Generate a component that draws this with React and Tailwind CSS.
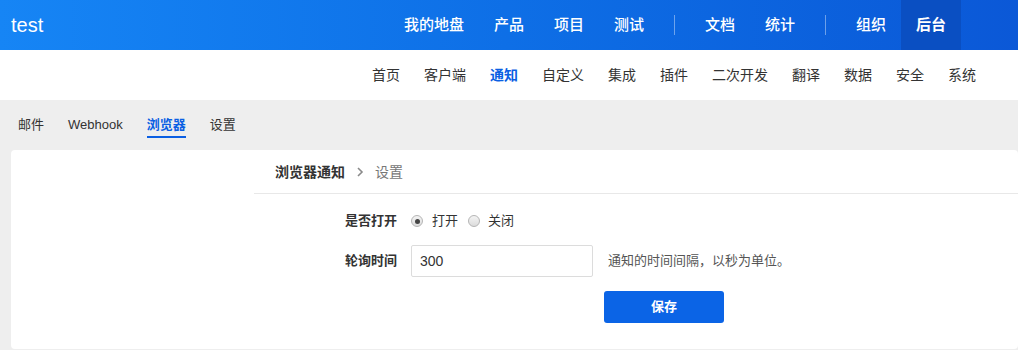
import React from "react";

const FONT = { fontFamily: '"Liberation Sans", "Noto Sans CJK SC", sans-serif' };

function Radio({ checked }) {
  return (
    <span className="relative inline-flex h-[12px] w-[12px] items-center justify-center rounded-full border border-[#b5b5b5] bg-gradient-to-b from-[#f4f4f4] to-[#dcdcdc]">
      {checked && <span className="h-[5px] w-[5px] rounded-full bg-[#444]" />}
    </span>
  );
}

export default function App() {
  const topNav = [
    { t: "我的地盘" },
    { t: "产品" },
    { t: "项目" },
    { t: "测试" },
    { div: true },
    { t: "文档" },
    { t: "统计" },
    { div: true },
    { t: "组织" },
    { t: "后台", active: true },
  ];
  const subNav = ["首页", "客户端", "通知", "自定义", "集成", "插件", "二次开发", "翻译", "数据", "安全", "系统"];
  const tabs = ["邮件", "Webhook", "浏览器", "设置"];

  return (
    <div className="h-[350px] w-[1018px] overflow-hidden bg-[#eeeeee]" style={FONT}>
      <header className="flex h-[50px] items-stretch bg-gradient-to-r from-[#1685f5] to-[#0b58d7] pl-[11px] pr-[57px]">
        <div className="flex items-center text-[20px] leading-[24px] text-white">test</div>
        <nav className="ml-auto flex items-stretch">
          {topNav.map((n, i) =>
            n.div ? (
              <span key={i} className="mx-[15px] my-[15px] w-[1px] bg-white/40" />
            ) : (
              <a
                key={i}
                className={
                  "flex items-center px-[15px] text-[15px] leading-[20px] text-white " +
                  (n.active ? "bg-[#0a4fc2] font-bold" : "font-medium")
                }
              >
                {n.t}
              </a>
            )
          )}
        </nav>
      </header>

      <div className="flex h-[50px] items-center justify-end gap-[24px] bg-white pr-[42px] text-[14px] leading-[20px] text-[#333]">
        {subNav.map((s) => (
          <a key={s} className={s === "通知" ? "font-bold text-[#0b5fe3]" : ""}>
            {s}
          </a>
        ))}
      </div>

      <div className="flex h-[50px] items-start gap-[24px] pl-[18px] pt-[16px] text-[13px] leading-[18px] text-[#333]">
        {tabs.map((t) => (
          <a
            key={t}
            className={
              "border-b-2 pb-[2px] " +
              (t === "浏览器" ? "border-[#0b5fe3] font-bold text-[#0b5fe3]" : "border-transparent")
            }
          >
            {t}
          </a>
        ))}
      </div>

      <div className="ml-[11px] flex h-[199px] rounded-[4px] bg-white">
        <div className="w-[243px] shrink-0" />
        <div className="flex-1">
          <div className="flex h-[44px] items-center border-b border-[#e8e8e8] pl-[21px] text-[14px] leading-[20px]">
            <span className="font-bold text-[#333]">浏览器通知</span>
            <svg className="mx-[11px]" width="8" height="10" viewBox="0 0 8 10">
              <path d="M2 1 L6 5 L2 9" fill="none" stroke="#8a8a8a" strokeWidth="1.6" />
            </svg>
            <span className="text-[#777]">设置</span>
          </div>

          <div className="mt-[17px] flex h-[20px] items-center text-[13px] leading-[20px]">
            <label className="w-[143px] text-right font-bold text-[#333]">是否打开</label>
            <div className="ml-[14px] flex items-center text-[#333]">
              <Radio checked />
              <span className="ml-[9px]">打开</span>
              <span className="ml-[10px]" />
              <Radio />
              <span className="ml-[8px]">关闭</span>
            </div>
          </div>

          <div className="mt-[14px] flex h-[32px] items-center text-[13px] leading-[20px]">
            <label className="w-[143px] text-right font-bold text-[#333]">轮询时间</label>
            <input
              readOnly
              value="300"
              className="ml-[14px] h-[32px] w-[182px] rounded-[2px] border border-[#dcdcdc] px-[8px] text-[14px] text-[#333] outline-none"
              style={FONT}
            />
            <span className="ml-[15px] text-[#555]">通知的时间间隔，以秒为单位。</span>
          </div>

          <div className="mt-[14px] pl-[350px]">
            <button className="h-[32px] w-[120px] rounded-[3px] bg-[#0b64e6] text-[13px] font-bold text-white" style={FONT}>
              保存
            </button>
          </div>
        </div>
      </div>
    </div>
  );
}
